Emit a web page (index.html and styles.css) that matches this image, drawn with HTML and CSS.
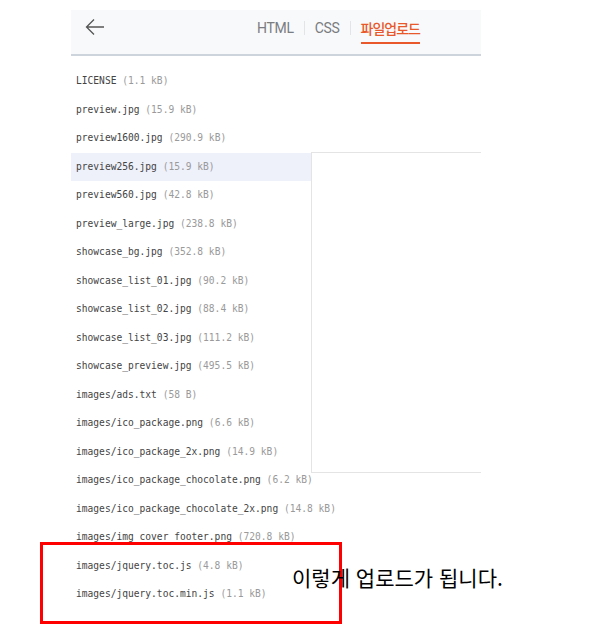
FILE: index.html
```html
<!DOCTYPE html>
<html lang="ko">
<head>
    <meta charset="UTF-8">
    <meta name="viewport" content="width=device-width, initial-scale=1.0">
    <title>파일업로드</title>
    <link rel="stylesheet" href="styles.css">
</head>
<body>
    <div class="app">
        <div class="header">
            <svg class="back" width="20" height="18" viewBox="0 0 20 18">
                <path d="M19 9H2M9 1.5L1.5 9L9 16.5" fill="none" stroke="#555" stroke-width="1.3"/>
            </svg>
            <div class="tabs">
                <span class="tab">HTML</span>
                <span class="sep"></span>
                <span class="tab">CSS</span>
                <span class="sep"></span>
                <span class="tab active">파일업로드</span>
            </div>
        </div>
        <ul class="files">
            <li>LICENSE <span class="size">(1.1 kB)</span></li>
            <li>preview.jpg <span class="size">(15.9 kB)</span></li>
            <li>preview1600.jpg <span class="size">(290.9 kB)</span></li>
            <li class="hover">preview256.jpg <span class="size">(15.9 kB)</span></li>
            <li>preview560.jpg <span class="size">(42.8 kB)</span></li>
            <li>preview_large.jpg <span class="size">(238.8 kB)</span></li>
            <li>showcase_bg.jpg <span class="size">(352.8 kB)</span></li>
            <li>showcase_list_01.jpg <span class="size">(90.2 kB)</span></li>
            <li>showcase_list_02.jpg <span class="size">(88.4 kB)</span></li>
            <li>showcase_list_03.jpg <span class="size">(111.2 kB)</span></li>
            <li>showcase_preview.jpg <span class="size">(495.5 kB)</span></li>
            <li>images/ads.txt <span class="size">(58 B)</span></li>
            <li>images/ico_package.png <span class="size">(6.6 kB)</span></li>
            <li>images/ico_package_2x.png <span class="size">(14.9 kB)</span></li>
            <li>images/ico_package_chocolate.png <span class="size">(6.2 kB)</span></li>
            <li>images/ico_package_chocolate_2x.png <span class="size">(14.8 kB)</span></li>
            <li>images/img_cover_footer.png <span class="size">(720.8 kB)</span></li>
            <li>images/jquery.toc.js <span class="size">(4.8 kB)</span></li>
            <li>images/jquery.toc.min.js <span class="size">(1.1 kB)</span></li>
        </ul>
        <div class="preview"></div>
    </div>
    <div class="mark"></div>
    <p class="caption">이렇게 업로드가 됩니다.</p>
</body>
</html>
```

FILE: styles.css
```css
body {
    margin: 0;
    background: #fff;
    font-family: "Noto Sans", "Noto Sans CJK KR", sans-serif;
}
.app {
    position: relative;
    width: 410px;
    height: 637px;
    margin-left: 71px;
    padding-top: 10px;
    box-sizing: border-box;
    overflow: hidden;
}
.header {
    display: flex;
    align-items: center;
    height: 36px;
    background: #f8f9fb;
    border-bottom: 2px solid #cdd4dc;
    padding: 0 0 8px 14px;
}
.back {
    display: block;
    margin-top: -2px;
}
.tabs {
    display: flex;
    align-items: center;
    margin-left: 152px;
    font-family: Roboto, "Noto Sans CJK KR", sans-serif;
    font-size: 14px;
    color: #7a7c80;
    height: 100%;
}
.tab {
    position: relative;
    letter-spacing: -0.3px;
}
.tab.active {
    color: #e8582a;
    font-weight: 500;
    letter-spacing: -1px;
}
.tab.active::after {
    content: "";
    position: absolute;
    left: 0;
    right: 0;
    bottom: -6px;
    height: 2px;
    background: #e8582a;
}
.sep {
    width: 1px;
    height: 14px;
    background: #e2e4e8;
    margin: 0 10px;
}
.files {
    list-style: none;
    margin: 0;
    padding: 11px 0 0;
}
.files li {
    height: 28.5px;
    line-height: 28.5px;
    width: 240px;
    padding-left: 5px;
    box-sizing: border-box;
    white-space: nowrap;
    font-family: "DejaVu Sans Mono", "Liberation Mono", monospace;
    font-size: 9.6px;
    color: #444;
}
.files li.hover {
    background: #eef0fa;
}
.size {
    color: #9a9a9a;
}
/* popup next to hovered row */
.preview {
    position: absolute;
    left: 240px;
    top: 152px;
    width: 200px;
    height: 319px;
    background: #fff;
    border: 1px solid #e4e4e4;
}
.mark {
    position: absolute;
    left: 40px;
    top: 542px;
    width: 296px;
    height: 76px;
    border: 3px solid #ff0000;
}
.caption {
    position: absolute;
    left: 292px;
    top: 562px;
    margin: 0;
    font-family: "Noto Sans CJK KR", sans-serif;
    font-size: 21px;
    color: #000;
}
```
